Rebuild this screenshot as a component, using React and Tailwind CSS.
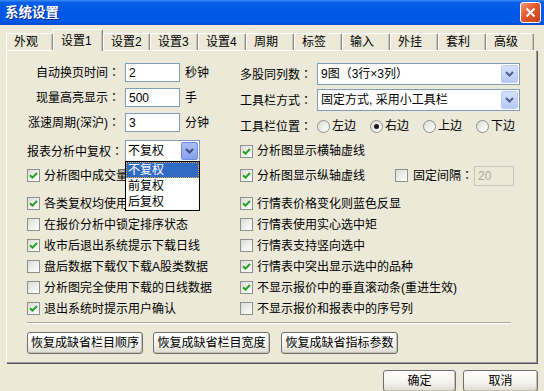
import React from "react";

const tabs = [
  { label: "外观", w: "w-[47px]" },
  { label: "设置1", w: "w-[50px]", active: true },
  { label: "设置2", w: "w-[47px]" },
  { label: "设置3", w: "w-[48px]" },
  { label: "设置4", w: "w-[48px]" },
  { label: "周期", w: "w-[48px]" },
  { label: "标签", w: "w-[48px]" },
  { label: "输入", w: "w-[48px]" },
  { label: "外挂", w: "w-[48px]" },
  { label: "套利", w: "w-[48px]" },
  { label: "高级", w: "w-[48px]" },
];

const leftChecks = [
  ["各类复权均使用向前复权", true],
  ["在报价分析中锁定排序状态", false],
  ["收市后退出系统提示下载日线", true],
  ["盘后数据下载仅下载A股类数据", false],
  ["分析图完全使用下载的日线数据", false],
  ["退出系统时提示用户确认", true],
];

const rightChecks = [
  ["行情表价格变化则蓝色反显", true],
  ["行情表使用实心选中矩", false],
  ["行情表支持竖向选中", false],
  ["行情表中突出显示选中的品种", true],
  ["不显示报价中的垂直滚动条(重进生效)", true],
  ["不显示报价和报表中的序号列", false],
];

// label text with a centred full-width colon, like the old bitmap font
const Label = ({ text, className = "" }) => (
  <span className={`whitespace-nowrap ${className}`}>
    {text}
    <span className="font-['Noto_Sans_CJK_TC',sans-serif]">：</span>
  </span>
);

const Check = ({ checked }) => (
  <span className="w-[13px] h-[13px] shrink-0 border border-[#8e8f8f] bg-[linear-gradient(135deg,#dcdcd5,#ffffff)] flex items-center justify-center">
    {checked && (
      <svg width="9" height="9" viewBox="0 0 9 9">
        <path d="M1 4.2l2.4 2.4L8 2" stroke="#21a121" strokeWidth="2" fill="none" />
      </svg>
    )}
  </span>
);

const Radio = ({ checked }) => (
  <span className="w-[13px] h-[13px] shrink-0 rounded-full border border-[#8e8f8f] bg-[linear-gradient(135deg,#dcdcd5,#ffffff)] flex items-center justify-center">
    {checked && <span className="w-[5px] h-[5px] rounded-full bg-[#1a1a1a]" />}
  </span>
);

const Chevron = ({ color = "#4d6185" }) => (
  <svg width="9" height="6" viewBox="0 0 9 6">
    <path d="M1 1l3.5 3.5L8 1" stroke={color} strokeWidth="2" fill="none" />
  </svg>
);

const CheckRow = ({ label, checked }) => (
  <div className="flex items-center h-[21px]">
    <Check checked={checked} />
    <span className="ml-[4px] whitespace-nowrap">{label}</span>
  </div>
);

const Btn = ({ children, className = "" }) => (
  <button
    className={`h-[22px] shrink-0 rounded-[3px] border border-[#6f6f6f] bg-[linear-gradient(180deg,#ffffff,#f3f2ec_60%,#dcdad0)] shadow-[inset_-1px_-1px_0_#c5c2b2] flex items-center justify-center text-[12px] leading-none ${className}`}
  >
    {children}
  </button>
);

export default function App() {
  return (
    <div className="w-[544px] h-[391px] overflow-hidden bg-[#ece9d8] text-[12px] text-black font-['Liberation_Sans','Noto_Sans_CJK_SC',sans-serif] leading-none select-none">
      {/* title bar */}
      <div className="h-[25px] flex items-center justify-between bg-[linear-gradient(180deg,#3c8cf5_0%,#0a5fe8_10%,#0057e5_50%,#0059e8_85%,#0049d2_100%)]">
        <span className="pl-[5px] text-white font-bold text-[13.5px] [text-shadow:1px_1px_0_#0c2a8a]">系统设置</span>
        <div className="mr-[3px] w-[21px] h-[21px] rounded-[3px] border border-white bg-[linear-gradient(135deg,#f29b7c,#e2582f_45%,#c7401b)] flex items-center justify-center">
          <svg width="11" height="11" viewBox="0 0 11 11">
            <path d="M1.5 1.5l8 8M9.5 1.5l-8 8" stroke="white" strokeWidth="2" />
          </svg>
        </div>
      </div>

      <div className="pl-[6px]">
        {/* tabs */}
        <div className="h-[25px] flex items-end">
          {tabs.map((t) => (
            <div
              key={t.label}
              className={`${t.w} ${
                t.active ? "h-[22px] -mb-px relative z-10" : "h-[17px]"
              } shrink-0 flex items-center pl-[7px] bg-[#ece9d8] border-l border-t border-l-white border-t-white border-r border-r-[#8a8a8a] rounded-t-[2px] shadow-[inset_-1px_0_0_#c9c6b6]`}
            >
              {t.label}
            </div>
          ))}
        </div>

        {/* panel */}
        <div className="w-[531px] h-[313px] border border-t-white border-l-white border-r-[#9d9d9d] border-b-[#9d9d9d] shadow-[1px_1px_0_#555555] pt-[12px] pl-[20px]">
          {/* top section */}
          <div className="flex">
            <div className="w-[213px] flex flex-col gap-[6px]">
              {[
                ["自动换页时间", "2", "秒钟"],
                ["现量高亮显示", "500", "手"],
                ["涨速周期(深沪)", "3", "分钟"],
              ].map(([label, val, unit]) => (
                <div key={label} className="flex items-center h-[19px]">
                  <Label text={label} className="w-[93px] text-right" />
                  <div className="ml-[5px] w-[55px] h-[19px] border border-[#7f9db9] bg-white flex items-center pl-[3px]">
                    {val}
                  </div>
                  <span className="ml-[5px]">{unit}</span>
                </div>
              ))}
            </div>
            <div className="flex flex-col gap-[4px]">
              {[
                ["多股同列数", "9图（3行×3列）"],
                ["工具栏方式", "固定方式, 采用小工具栏"],
              ].map(([label, val]) => (
                <div key={label} className="flex items-center h-[22px]">
                  <Label text={label} className="w-[77px]" />
                  <div className="w-[203px] h-[22px] border border-[#7f9db9] bg-white flex items-center justify-between pl-[3px]">
                    <span>{val}</span>
                    <span className="mr-[1px] w-[17px] h-[18px] rounded-[2px] border border-[#bacdf6] bg-[linear-gradient(180deg,#d6e2fc,#b6c9f7)] flex items-center justify-center">
                      <Chevron />
                    </span>
                  </div>
                </div>
              ))}
              <div className="flex items-center h-[22px]">
                <Label text="工具栏位置" className="w-[77px]" />
                {[
                  ["左边", false],
                  ["右边", true],
                  ["上边", false],
                  ["下边", false],
                ].map(([label, on]) => (
                  <div key={label} className="w-[53px] flex items-center">
                    <Radio checked={on} />
                    <span className="ml-[2px]">{label}</span>
                  </div>
                ))}
              </div>
            </div>
          </div>

          {/* row 4 */}
          <div className="mt-[3px] flex items-center h-[22px]">
            <div className="w-[213px] flex items-center">
              <Label text="报表分析中复权" className="w-[93px] text-right" />
              <div className="ml-[5px] w-[75px] h-[22px] relative border border-[#7f9db9] bg-white flex items-center justify-between pl-[2px]">
                <span>不复权</span>
                <span className="mr-[1px] w-[17px] h-[18px] rounded-[2px] border border-[#6f8ae0] bg-[linear-gradient(180deg,#a9bcf5,#8aa2ee)] flex items-center justify-center">
                  <Chevron color="#3d4f7f" />
                </span>
                <div className="absolute left-[-1px] top-[20px] w-[75px] border border-black bg-white z-20">
                  <div className="h-[16px] flex items-center pl-[2px] bg-[#316ac5] text-white outline-1 outline-dotted outline-[#e8a33a] -outline-offset-1">
                    不复权
                  </div>
                  <div className="h-[16px] flex items-center pl-[2px]">前复权</div>
                  <div className="h-[16px] flex items-center pl-[2px]">后复权</div>
                </div>
              </div>
            </div>
            <CheckRow label="分析图显示横轴虚线" checked />
          </div>

          {/* row 5 */}
          <div className="mt-[3px] flex items-center h-[21px]">
            <div className="w-[213px]">
              <CheckRow label="分析图中成交量显示" checked />
            </div>
            <CheckRow label="分析图显示纵轴虚线" checked />
            <div className="ml-[30px] flex items-center">
              <Check />
              <Label text="固定间隔" className="ml-[5px]" />
              <div className="ml-[1px] w-[40px] h-[20px] border border-[#c9c7ba] flex items-center pl-[3px] text-[#aca899]">
                20
              </div>
            </div>
          </div>

          {/* check lists */}
          <div className="mt-[7px] flex">
            <div className="w-[213px] flex flex-col">
              {leftChecks.map(([l, c]) => (
                <CheckRow key={l} label={l} checked={c} />
              ))}
            </div>
            <div className="flex flex-col">
              {rightChecks.map(([l, c]) => (
                <CheckRow key={l} label={l} checked={c} />
              ))}
            </div>
          </div>

          <div className="mt-[3px] w-[484px] h-[2px] border-t border-t-[#aca899] border-b border-b-white" />

          <div className="mt-[8px] flex">
            <Btn className="w-[116px]">恢复成缺省栏目顺序</Btn>
            <Btn className="ml-[10px] w-[117px]">恢复成缺省栏目宽度</Btn>
            <Btn className="ml-[11px] w-[117px]">恢复成缺省指标参数</Btn>
          </div>
        </div>
      </div>

      {/* dialog buttons */}
      <div className="mt-[7px] pr-[6px] flex justify-end gap-[7px]">
        <Btn className="w-[73px]">确定</Btn>
        <Btn className="w-[75px]">取消</Btn>
      </div>
    </div>
  );
}
